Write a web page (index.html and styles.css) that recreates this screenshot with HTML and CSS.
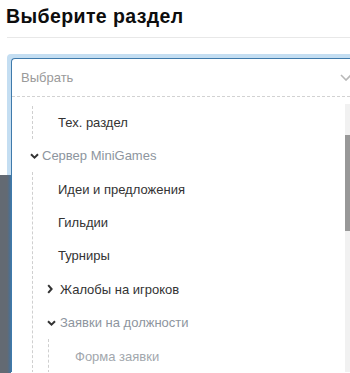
FILE: index.html
```html
<!DOCTYPE html>
<html lang="ru">
  <head>
    <meta charset="UTF-8" />
    <meta name="viewport" content="width=device-width, initial-scale=1.0" />
    <title>Выберите раздел</title>
    <link rel="stylesheet" href="styles.css">
  </head>
  <body>
    <h1 class="title">Выберите раздел</h1>
    <div class="rule"></div>

    <div class="backdrop"></div>

    <div class="picker">
      <div class="picker__control">
        <span class="picker__placeholder">Выбрать</span>
        <svg class="picker__arrow" width="12" height="7" viewBox="0 0 12 7"><path d="M1 1l5 5 5-5" fill="none" stroke="#b8b8b8" stroke-width="1.6"/></svg>
      </div>

      <div class="picker__menu">
        <ul class="tree">
          <li>
            <ul class="tree__group">
              <li class="tree__row tree__row--leaf">Тех. раздел</li>
            </ul>
          </li>
          <li>
            <div class="tree__row tree__row--top tree__row--open">
              <span class="tree__caret tree__caret--top"><svg width="9" height="6" viewBox="0 0 9 6"><path d="M1 1.2l3.5 3.4 3.5-3.4" fill="none" stroke="#333" stroke-width="2"/></svg></span>
              Сервер MiniGames
            </div>
            <ul class="tree__group">
              <li class="tree__row tree__row--leaf">Идеи и предложения</li>
              <li class="tree__row tree__row--leaf">Гильдии</li>
              <li class="tree__row tree__row--leaf">Турниры</li>
              <li class="tree__row tree__row--branch">
                <span class="tree__caret"><svg width="6" height="10" viewBox="0 0 6 10"><path d="M1.2 1.2l3.4 3.8-3.4 3.8" fill="none" stroke="#333" stroke-width="2"/></svg></span>
                Жалобы на игроков
              </li>
              <li>
                <div class="tree__row tree__row--branch tree__row--open">
                  <span class="tree__caret"><svg width="9" height="6" viewBox="0 0 9 6"><path d="M1 1.2l3.5 3.4 3.5-3.4" fill="none" stroke="#333" stroke-width="2"/></svg></span>
                  Заявки на должности
                </div>
                <ul class="tree__group tree__group--deep">
                  <li class="tree__row tree__row--deep">Форма заявки</li>
                </ul>
              </li>
            </ul>
          </li>
        </ul>

        <div class="picker__scroll"><div class="picker__thumb"></div></div>
      </div>
    </div>
  </body>
</html>
```

FILE: styles.css
```css
*{box-sizing:border-box;}
body{margin:0;width:350px;height:373px;overflow:hidden;position:relative;background:#fff;font-family:"Liberation Sans",Arial,sans-serif;}
.title{margin:0;padding:4px 0 0 6px;font-size:19.5px;line-height:24px;letter-spacing:.4px;font-weight:bold;color:#0d0d0d;}
.rule{margin:9px 0 0 7px;border-top:1px solid #e8e8e8;}

.backdrop{position:absolute;left:0;top:175px;width:11px;height:198px;background:linear-gradient(to right,#636a73 0,#636a73 65%,#4f6f8e 88%,#3f78a8 100%);z-index:1;}

.picker{margin:20px 0 0 11px;width:339px;border-top:1px solid #3f7aab;border-left:1px solid #3f7aab;border-radius:4px 0 0 0;box-shadow:-4px -4px 0 0 #c4def2,0 -4px 0 0 #c4def2;background:#fff;}
.picker__control{height:38px;display:flex;align-items:center;justify-content:space-between;padding:0 0 0 9px;border-bottom:1px dashed #d2d2d2;overflow:hidden;}
.picker__arrow{flex:none;margin-right:-2px;}
.picker__placeholder{font-size:13px;color:#9a9a9a;}
.picker__menu{position:relative;height:275px;padding-top:8.5px;overflow:hidden;}
.picker__scroll{position:absolute;left:333px;top:7px;bottom:0;width:10px;background:#f1f1f1;}
.picker__thumb{margin-top:31px;height:96px;background:#989898;}

.tree,.tree ul{list-style:none;margin:0;padding:0;}
.tree .tree__group{margin-left:20px;border-left:1px dashed #cfcfcf;}
.tree .tree__group--deep{margin-left:15px;}
.tree__row{height:33.43px;display:flex;align-items:center;font-size:13px;color:#333;white-space:nowrap;}
.tree__row--top{padding-left:18px;}
.tree__row--leaf{padding-left:25px;}
.tree__row--branch{padding-left:14px;}
.tree__row--deep{padding-left:26px;color:#a2a7ad;}
.tree__row--open{color:#8d959e;}
.tree__caret{width:13px;display:flex;align-items:center;}
.tree__caret--top{width:12px;}
```
